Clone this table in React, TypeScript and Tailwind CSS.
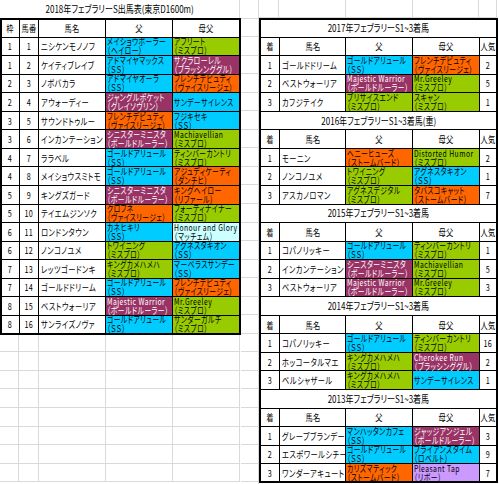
import React from "react";

type B = { t: string; s?: string; c: string };

const CY = "bg-[#00ccff] text-black";
const GR = "bg-[#99cc00] text-black";
const OR = "bg-[#ff6600] text-black";
const PU = "bg-[#993366] text-white";
const LC = "bg-[#ccffff] text-black";
const LV = "bg-[#cc99ff] text-black";

const b = (t: string, s: string | undefined, c: string): B => ({ t, s, c });

const GA = () => b("ゴールドアリュール", "（ＳＳ）", CY);
const MW = () => b("Majestic Warrior", "（ボールドルーラー）", PU);
const MG = () => b("Mr.Greeley", "（ミスプロ）", GR);
const FD = () => b("フレンチデピュティ", "（ヴァイスリージェ）", OR);
const SM = () => b("シニスターミニスタ", "（ボールドルーラー）", PU);
const TC = () => b("ティンバーカントリ", "（ミスプロ）", GR);
const KK = () => b("キングカメハメハ", "（ミスプロ）", GR);

const leftRows: [string, string, string, B, B][] = [
  ["1", "1", "ニシケンモノノフ", b("メイショウボーラー", "（ヘイロー）", CY), b("アフリート", "（ミスプロ）", GR)],
  ["1", "2", "ケイティブレイブ", b("アドマイヤマックス", "（ＳＳ）", CY), b("サクラローレル", "（ブラッシンググル）", PU)],
  ["2", "3", "ノボバカラ", b("アドマイヤオーラ", "（ＳＳ）", CY), FD()],
  ["2", "4", "アウォーディー", b("ジャングルポケット", "（グレイソヴリン）", PU), b("サンデーサイレンス", undefined, CY)],
  ["3", "5", "サウンドトゥルー", FD(), b("フジキセキ", "（ＳＳ）", CY)],
  ["3", "6", "インカンテーション", SM(), b("Machiavellian", "（ミスプロ）", GR)],
  ["4", "7", "ララベル", GA(), TC()],
  ["4", "8", "メイショウスミトモ", GA(), b("アジュディケーティ", "（ダンチヒ）", OR)],
  ["5", "9", "キングズガード", SM(), b("キングヘイロー", "（リファール）", OR)],
  ["5", "10", "テイエムジンソク", b("クロフネ", "（ヴァイスリージェ）", OR), b("フォーティナイナー", "（ミスプロ）", GR)],
  ["6", "11", "ロンドンタウン", b("カネヒキリ", "（ＳＳ）", CY), b("Honour and Glory", "（マッチェム）", LC)],
  ["6", "12", "ノンコノユメ", b("トワイニング", "（ミスプロ）", GR), b("アグネスタキオン", "（ＳＳ）", CY)],
  ["7", "13", "レッツゴードンキ", KK(), b("マーベラスサンデー", "（ＳＳ）", CY)],
  ["7", "14", "ゴールドドリーム", GA(), FD()],
  ["8", "15", "ベストウォーリア", MW(), MG()],
  ["8", "16", "サンライズノヴァ", GA(), b("サンダーガルチ", "（ミスプロ）", GR)],
];

type RR = [string, string, B, B, string];
const rightBlocks: { title: string; rows: RR[] }[] = [
  {
    title: "2017年フェブラリーS1~3着馬",
    rows: [
      ["1", "ゴールドドリーム", GA(), FD(), "2"],
      ["2", "ベストウォーリア", MW(), MG(), "5"],
      ["3", "カフジテイク", b("プリサイスエンド", "（ミスプロ）", GR), b("スキャン", "（ミスプロ）", GR), "1"],
    ],
  },
  {
    title: "2016年フェブラリーS1~3着馬(重)",
    rows: [
      ["1", "モーニン", b("ヘニーヒューズ", "（ストームバード）", OR), b("Distorted Humor", "（ミスプロ）", GR), "2"],
      ["2", "ノンコノユメ", b("トワイニング", "（ミスプロ）", GR), b("アグネスタキオン", "（ＳＳ）", CY), "1"],
      ["3", "アスカノロマン", b("アグネスデジタル", "（ミスプロ）", GR), b("タバスコキャット", "（ストームバード）", OR), "7"],
    ],
  },
  {
    title: "2015年フェブラリーS1~3着馬",
    rows: [
      ["1", "コパノリッキー", GA(), TC(), "1"],
      ["2", "インカンテーション", SM(), b("Machiavellian", "（ミスプロ）", GR), "5"],
      ["3", "ベストウォーリア", MW(), MG(), "3"],
    ],
  },
  {
    title: "2014年フェブラリーS1~3着馬",
    rows: [
      ["1", "コパノリッキー", GA(), TC(), "16"],
      ["2", "ホッコータルマエ", KK(), b("Cherokee Run", "（ブラッシンググル）", PU), "2"],
      ["3", "ベルシャザール", KK(), b("サンデーサイレンス", undefined, CY), "1"],
    ],
  },
  {
    title: "2013年フェブラリーS1~3着馬",
    rows: [
      ["1", "グレープブランデー", b("マンハッタンカフェ", "（ＳＳ）", CY), b("ジャッジアンジェル", "（ボールドルーラー）", PU), "3"],
      ["2", "エスポワールシチー", GA(), b("ブライアンズタイム", "（ロベルト）", CY), "9"],
      ["3", "ワンダーアキュート", b("カリズマティック", "（ストームバード）", OR), b("Pleasant Tap", "（リボー）", LV), "7"],
    ],
  },
];

const rowCls = (i: number, n: number) =>
  i === 0 ? "h-[18.06px] border-b border-black" : i === n - 1 ? "h-[17.06px]" : "h-[18.56px] border-b border-black";

function Blood({ v, w, last }: { v: B; w: string; last?: boolean }) {
  return (
    <div
      className={`${w} ${v.c} ${last ? "" : "border-r border-black"} h-full flex items-center pl-[1px] text-[9.2px] leading-[9px]`}
    >
      <div className="flex flex-col whitespace-nowrap origin-left scale-x-[0.74] tracking-[0.6px]">
        <span>{v.t}</span>
        {v.s && <span>{v.s}</span>}
      </div>
    </div>
  );
}

function Cell({ w, children, center, last }: { w: string; children?: React.ReactNode; center?: boolean; last?: boolean }) {
  return (
    <div
      className={`${w} h-full ${last ? "" : "border-r border-black"} flex items-center ${center ? "justify-center" : "pl-[2px]"} whitespace-nowrap text-[9.5px] leading-[10px]`}
    >
      <span className={`${center ? "origin-center" : "origin-left"} scale-x-[0.76] tracking-[0.6px]`}>{children}</span>
    </div>
  );
}

function EmptyCell({ w, h }: { w: string; h: string }) {
  return <div className={`${w} ${h} shrink-0 border-r border-b border-[#d9d9d9]`} />;
}

export default function App() {
  const n = leftRows.length + 1;
  const rightRows: React.ReactNode[] = [];
  let idx = 0;
  const total = rightBlocks.length * 5;
  rightBlocks.forEach((blk, bi) => {
    rightRows.push(
      <div key={`t${bi}`} className={`${rowCls(idx++, total)} flex items-center justify-center text-[10px] leading-[10px] whitespace-nowrap`}>
        <span className="scale-x-[0.8] origin-center">{blk.title}</span>
      </div>
    );
    rightRows.push(
      <div key={`h${bi}`} className={`${rowCls(idx++, total)} flex`}>
        <Cell w="w-[18.8px]" center>着</Cell>
        <Cell w="w-[66.7px]" center>馬名</Cell>
        <Cell w="w-[66.7px]" center>父</Cell>
        <Cell w="w-[66.6px]" center>母父</Cell>
        <Cell w="w-[16.2px]" center last>人気</Cell>
      </div>
    );
    blk.rows.forEach((r, ri) => {
      rightRows.push(
        <div key={`r${bi}-${ri}`} className={`${rowCls(idx++, total)} flex`}>
          <Cell w="w-[18.8px]" center>{r[0]}</Cell>
          <Cell w="w-[66.7px]">{r[1]}</Cell>
          <Blood v={r[2]} w="w-[66.7px]" />
          <Blood v={r[3]} w="w-[66.6px]" />
          <Cell w="w-[16.2px]" center last>{r[4]}</Cell>
        </div>
      );
    });
  });

  const emptyRows = Array.from({ length: 8 });
  const gapRows = Array.from({ length: 27 });

  return (
    <div className="w-[499px] h-[484px] overflow-hidden bg-white text-black flex font-['Noto_Sans_CJK_JP','Noto_Sans',sans-serif] [font-feature-settings:'palt']">
      {/* left section */}
      <div className="w-[241px] shrink-0 flex flex-col">
        <div className="w-[240px] h-[17.56px] shrink-0 border-r border-[#d9d9d9] flex items-center justify-center text-[10px] leading-[10px] whitespace-nowrap">
          <span className="scale-x-[0.8] origin-center">2018年フェブラリーS出馬表(東京D1600m)</span>
        </div>
        <div className="w-[241px] shrink-0 border-2 border-black flex flex-col">
          <div className={`${rowCls(0, n)} flex`}>
            <Cell w="w-[17.8px]" center>枠</Cell>
            <Cell w="w-[19.7px]" center>馬番</Cell>
            <Cell w="w-[67px]" center>馬名</Cell>
            <Cell w="w-[67px]" center>父</Cell>
            <Cell w="w-[65.5px]" center last>母父</Cell>
          </div>
          {leftRows.map((r, i) => (
            <div key={i} className={`${rowCls(i + 1, n)} flex`}>
              <Cell w="w-[17.8px]" center>{r[0]}</Cell>
              <Cell w="w-[19.7px]" center>{r[1]}</Cell>
              <Cell w="w-[67px]">{r[2]}</Cell>
              <Blood v={r[3]} w="w-[67px]" />
              <Blood v={r[4]} w="w-[65.5px]" last />
            </div>
          ))}
        </div>
        {emptyRows.map((_, i) => (
          <div key={i} className="flex">
            <EmptyCell w="w-[19.3px]" h={i === 0 ? "h-[17.5px]" : "h-[18.56px]"} />
            <EmptyCell w="w-[19.7px]" h={i === 0 ? "h-[17.5px]" : "h-[18.56px]"} />
            <EmptyCell w="w-[67px]" h={i === 0 ? "h-[17.5px]" : "h-[18.56px]"} />
            <EmptyCell w="w-[67px]" h={i === 0 ? "h-[17.5px]" : "h-[18.56px]"} />
            <EmptyCell w="w-[67px]" h={i === 0 ? "h-[17.5px]" : "h-[18.56px]"} />
          </div>
        ))}
      </div>
      {/* gap column */}
      <div className="w-[18px] shrink-0 flex flex-col">
        {gapRows.map((_, i) => (
          <EmptyCell key={i} w="w-[18px]" h="h-[18.56px]" />
        ))}
      </div>
      {/* right section */}
      <div className="w-[239px] shrink-0 flex flex-col">
        <div className="flex shrink-0">
          <EmptyCell w="w-[20.3px]" h="h-[17.56px]" />
          <EmptyCell w="w-[66.7px]" h="h-[17.56px]" />
          <EmptyCell w="w-[66.7px]" h="h-[17.56px]" />
          <EmptyCell w="w-[66.6px]" h="h-[17.56px]" />
          <EmptyCell w="w-[18px]" h="h-[17.56px]" />
        </div>
        <div className="w-[239px] shrink-0 border-2 border-black flex flex-col">{rightRows}</div>
      </div>
    </div>
  );
}
